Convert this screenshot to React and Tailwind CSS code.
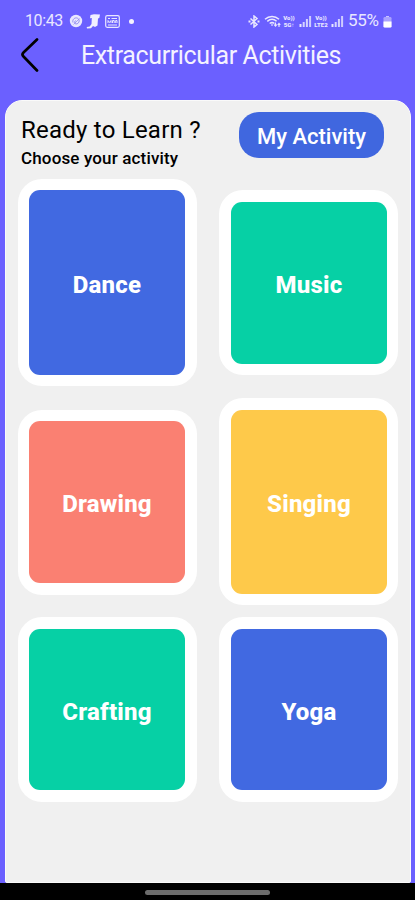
const leftColumn = [
  { name: 'Dance', box: 'h-[207px] bg-white pt-[11px] pb-[11px] pl-[11px] pr-[12px]', fill: 'bg-[#4169e1] pt-[5px]' },
  { name: 'Drawing', box: 'h-[185px] bg-white mt-[24px] pt-[11px] pb-[12px] pl-[11px] pr-[12px]', fill: 'bg-[#fa8072] pt-[4px]' },
  { name: 'Crafting', box: 'h-[185px] bg-white mt-[22px] pt-[12px] pb-[12px] pl-[11px] pr-[12px]', fill: 'bg-[#06d0a5] pt-[4px]' },
];

const rightColumn = [
  { name: 'Music', box: 'h-[185px] bg-white mt-[11px] pt-[12px] pb-[11px] pl-[12px] pr-[11px]', fill: 'bg-[#06d0a5] pt-[4px]' },
  { name: 'Singing', box: 'h-[207px] bg-white mt-[23px] pt-[12px] pb-[11px] pl-[12px] pr-[11px]', fill: 'bg-[#fec94a] pt-[4px]' },
  { name: 'Yoga', box: 'h-[185px] bg-white mt-[12px] pt-[12px] pb-[12px] pl-[12px] pr-[11px]', fill: 'bg-[#4169e1] pt-[4px]' },
];

function Card({ name, box, fill }) {
  return (
    <div className={`${box} w-[179px] rounded-[24px]`}>
      <div className={`${fill} flex h-full items-center justify-center rounded-[11px] text-[24px] font-extrabold tracking-[0.2px] text-white`}>
        {name}
      </div>
    </div>
  );
}

function Signal() {
  return (
    <svg className="block h-[12px] w-[13px]" viewBox="0 0 13 12" fill="#e9e7ff">
      <rect x="0.5" y="9" width="2" height="3" />
      <rect x="3.7" y="7" width="2" height="5" opacity=".85" />
      <rect x="6.9" y="4" width="2" height="8" opacity=".85" />
      <rect x="10.1" y="1" width="2" height="11" opacity=".8" />
    </svg>
  );
}

function NetworkLabel({ top, bottom }) {
  return (
    <div className="flex h-[14px] flex-col items-center justify-center text-[6px] leading-[7px] font-black">
      <span>{top}</span>
      <span>{bottom}</span>
    </div>
  );
}

function StatusBar() {
  return (
    <div className="flex h-[34px] justify-between pt-[8px] pr-[23px] pl-[25px] text-[#e9e7ff]">
      <div className="flex h-[26px] items-center">
        <span className="w-[38px] text-[16px] tracking-[-0.4px] whitespace-nowrap">10:43</span>
        <svg className="ml-[6px] h-[14px] w-[14px]" viewBox="0 0 14 14">
          <circle cx="7" cy="7" r="6.2" fill="#e9e7ff" />
          <path d="M4 8.5C3 5.5 6 3 8.5 4.2S10.500 9 8 9.800 5 7.500 6.700 6.500" fill="none" stroke="#8b82ee" strokeWidth=".9" />
          <path d="M4.500 10.500l6-6" stroke="#8b82ee" strokeWidth=".7" />
        </svg>
        <svg className="ml-[3px] h-[16px] w-[15px]" viewBox="0 0 15 16">
          <path d="M4.500 2L8 1.200l6 .3-.7 3.500-1.300.5-.5 7-2.500 1.500L7 13l-2 2.300-4 .2L.7 14l3-.5L5.500 11l.3-6-1.800.3z" fill="#f1efff" />
        </svg>
        <svg className="ml-[4px] h-[13px] w-[15px]" viewBox="0 0 15 13" fill="none" stroke="#e9e7ff">
          <rect x=".7" y=".7" width="13.600" height="11.600" rx="1.500" strokeWidth="1.200" />
          <path d="M3 3.500h2M6.500 3.500h5.500M3 10h9" strokeWidth="1" />
          <path d="M3 8V5.500l1.500 2L6 5.500V8M7.500 8V5.500h1.700V8M10.700 8V5.500H12V8" strokeWidth="1" />
        </svg>
        <span className="ml-[9px] h-[5px] w-[5px] rounded-full bg-[#f4f2ff]" />
      </div>
      <div className="flex h-[26px] items-center">
        <svg className="h-[13px] w-[12px]" viewBox="0 0 12 13" fill="none" stroke="#e9e7ff" strokeWidth="1.500">
          <path d="M2.500 3.500l6.500 6-3 2.500V1l3 2.500-6.500 6" />
          <path d="M.5 6.500h2M9.500 6.500h2" strokeWidth="1.800" />
        </svg>
        <svg className="ml-[4px] h-[13px] w-[17px]" viewBox="0 0 17 13" fill="none" stroke="#e9e7ff">
          <path d="M1 4.200C5 .5 11 .5 15 4.200M3.300 6.300c3-2.500 6.500-2.500 9.300 0M5.700 8.500c1.500-1.300 3.300-1.300 4.700 0" strokeWidth="1.500" />
          <path d="M8 11V8.500M11.500 7.500V11M10 9.500l1.500 1.700L13 9.500M15 12V8.500M13.800 9.800L15 8.300l1.300 1.500" strokeWidth="1.100" />
        </svg>
        <div className="ml-[1px] w-[14px]"><NetworkLabel top="Vo))" bottom="5G↑" /></div>
        <div className="ml-[3px]"><Signal /></div>
        <div className="ml-[1px] w-[16px]"><NetworkLabel top="Vo))" bottom="LTE2" /></div>
        <div className="ml-[2px]"><Signal /></div>
        <span className="ml-[4px] w-[33px] text-[17px] tracking-[-0.3px] whitespace-nowrap">55%</span>
        <svg className="ml-[2px] h-[13px] w-[9px]" viewBox="0 0 9 13">
          <path d="M3 1h3v1.500H3z" fill="#c9c4ff" />
          <rect x=".5" y="2" width="8" height="10.500" rx="1.300" fill="#aaa2ff" />
          <path d="M.5 6.500h8v4.700q0 1.300-1.300 1.300H1.800Q.5 12.500.5 11.200z" fill="#fff" />
        </svg>
      </div>
    </div>
  );
}

export default function App() {
  return (
    <div className="flex h-[900px] w-[415px] flex-col overflow-hidden bg-[#6b60ff] font-['Roboto',sans-serif]">
      <StatusBar />
      <header className="flex h-[66px] items-start">
        <svg className="mt-[2px] ml-[20px] h-[38px] w-[20px]" viewBox="0 0 20 38" fill="none" stroke="#000" strokeWidth="2.700" strokeLinecap="round" strokeLinejoin="round">
          <path d="M17 3.500L3.500 16.500Q1.500 18.500 3.500 20.500L17 34.500" />
        </svg>
        <h1 className="mt-[5px] ml-[41px] text-[25px] leading-[34px] tracking-[-0.37px] whitespace-nowrap text-[#f4f2ff]">Extracurricular Activities</h1>
      </header>
      <main className="mr-[4px] ml-[5px] h-[783px] rounded-t-[17px] rounded-b-[2px] border border-[#fafafa] bg-[#f0f0f0]">
        <div className="flex h-[78px] justify-between pr-[26px] pl-[15px]">
          <div className="pt-[14px] whitespace-nowrap text-black">
            <h2 className="text-[24px] leading-[30px] tracking-[0.23px]">Ready to Learn ?</h2>
            <p className="mt-[3px] text-[17px] leading-[20px] font-medium tracking-[0.15px]">Choose your activity</p>
          </div>
          <button className="mt-[11px] flex h-[46px] w-[145px] items-center justify-center rounded-[20px] bg-[#4067df] pt-[3px] text-[22px] font-medium whitespace-nowrap text-white">My Activity</button>
        </div>
        <div className="flex gap-[22px] pl-[12px]">
          <div className="flex flex-col">
            {leftColumn.map((c) => <Card key={c.name} {...c} />)}
          </div>
          <div className="flex flex-col">
            {rightColumn.map((c) => <Card key={c.name} {...c} />)}
          </div>
        </div>
      </main>
      <footer className="flex h-[17px] justify-center bg-black pt-[7px]">
        <div className="h-[5px] w-[125px] rounded-full bg-[#6c6c6c]" />
      </footer>
    </div>
  );
}
